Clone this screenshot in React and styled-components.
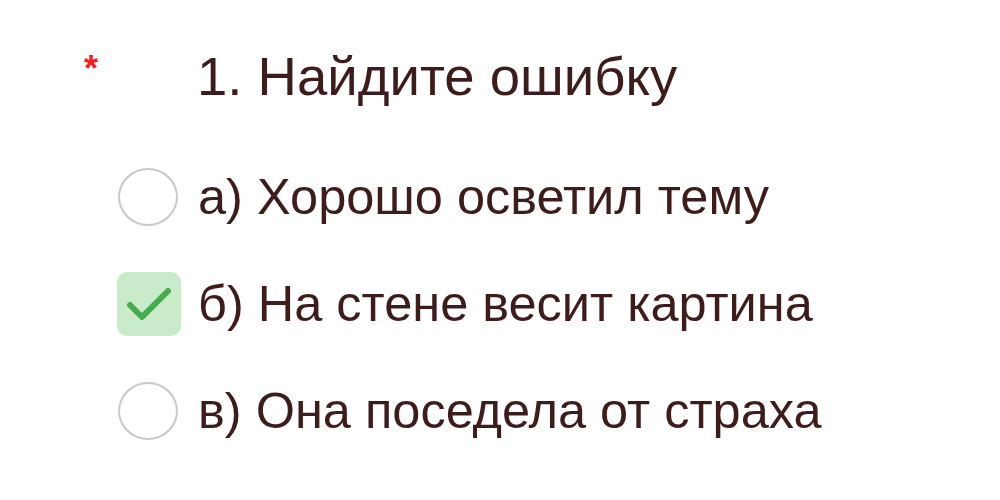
import React from "react";
import styled, { createGlobalStyle } from "styled-components";

const Global = createGlobalStyle`
  html, body { margin: 0; padding: 0; background: #fff; }
  body { font-family: "Liberation Sans", Arial, sans-serif; }
`;

const Page = styled.div`
  width: 1000px;
  height: 500px;
  box-sizing: border-box;
  padding: 44px 0 0 84px;
  color: #3f1c1c;
`;

const Header = styled.div`
  display: flex;
  align-items: flex-start;
`;

const Required = styled.span`
  width: 113px;
  margin-top: 7px;
  color: #ff1a1a;
  font-size: 36px;
  line-height: 1;
  font-weight: 700;
`;

const Title = styled.h1`
  margin: 0;
  font-size: 54.5px;
  font-weight: 400;
  line-height: 66px;
`;

const Options = styled.div`
  display: flex;
  flex-direction: column;
  gap: 41px;
  margin: 54px 0 0 34px;
`;

const Option = styled.label`
  display: flex;
  align-items: center;
  gap: 20px;
  height: 66px;
`;

const Radio = styled.span`
  box-sizing: border-box;
  width: 60px;
  height: 58px;
  border-radius: 50%;
  border: 2px solid #c9c9c9;
  background: #fff;
  flex: none;
`;

const Check = styled.span`
  width: 64px;
  height: 64px;
  border-radius: 10px;
  background: #c9ebca;
  display: flex;
  align-items: center;
  justify-content: center;
  flex: none;
  margin-left: -1px;
  margin-right: -3px;
`;

const Text = styled.span`
  font-size: 50.5px;
  line-height: 66px;
`;

const options = [
  { text: "а) Хорошо осветил тему", checked: false },
  { text: "б) На стене весит картина", checked: true },
  { text: "в) Она поседела от страха", checked: false },
];

export default function App() {
  return (
    <>
      <Global />
      <Page>
        <Header>
          <Required>*</Required>
          <Title>1. Найдите ошибку</Title>
        </Header>
        <Options>
          {options.map((o) => (
            <Option key={o.text}>
              {o.checked ? (
                <Check>
                  <svg width="46" height="36" viewBox="0 0 46 36">
                    <path
                      d="M4 19 L16 31 L42 5"
                      fill="none"
                      stroke="#45ad4f"
                      strokeWidth="6"
                      strokeLinecap="round"
                      strokeLinejoin="round"
                    />
                  </svg>
                </Check>
              ) : (
                <Radio />
              )}
              <Text>{o.text}</Text>
            </Option>
          ))}
        </Options>
      </Page>
    </>
  );
}
